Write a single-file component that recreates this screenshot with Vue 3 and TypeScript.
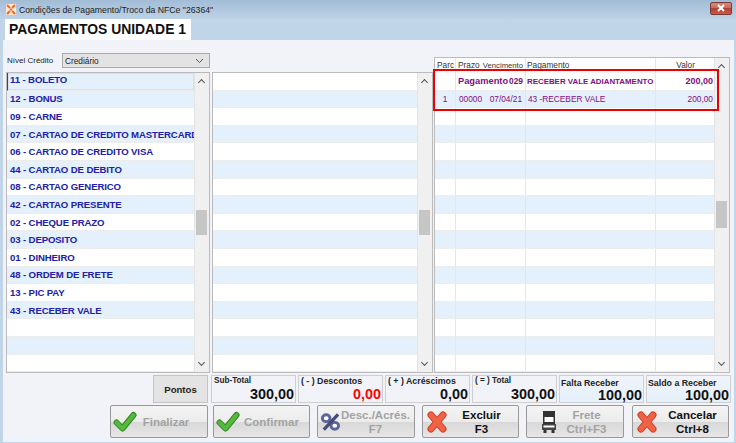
<script setup lang="ts">
const items = ['11 - BOLETO','12 - BONUS','09 - CARNE','07 - CARTAO DE CREDITO MASTERCARD','06 - CARTAO DE CREDITO VISA','44 - CARTAO DE DEBITO','08 - CARTAO GENERICO','42 - CARTAO PRESENTE','02 - CHEQUE PRAZO','03 - DEPOSITO','01 - DINHEIRO','48 - ORDEM DE FRETE','13 - PIC PAY','43 - RECEBER VALE','','','']
const midRows = Array.from({ length: 17 })
const rightRows = Array.from({ length: 15 })
const totals = [
  { label: 'Sub-Total', value: '300,00', cls: 'sm' },
  { label: '( - ) Descontos', value: '0,00', cls: 'red' },
  { label: '( + ) Acréscimos', value: '0,00', cls: '' },
  { label: '( = ) Total', value: '300,00', cls: 'sm' },
  { label: 'Falta Receber', value: '100,00', cls: 'blue' },
  { label: 'Saldo a Receber', value: '100,00', cls: 'blue' },
]
</script>

<template>
  <div class="win">
    <div class="title">
      <svg class="appicon" width="10" height="11" viewBox="0 0 10 11"><rect width="10" height="11" fill="#fbe6d2"/><path d="M1 1l3 3M9 1L6 4M1 10l3-3M9 10L6 7" stroke="#ef6a2a" stroke-width="2"/><rect x="4" y="4.5" width="2" height="2" fill="#ef6a2a"/></svg>
      <span class="title-text">Condições de Pagamento/Troco da NFCe "26364"</span>
      <div class="close"><svg width="10" height="8" viewBox="0 0 10 8"><path d="M2 1l6 6M8 1L2 7" stroke="#fff" stroke-width="2"/></svg></div>
    </div>
    <div class="tabbar"><div class="tab">PAGAMENTOS UNIDADE 1</div></div>
    <div class="content">
      <div class="filter">
        <span class="flabel">Nível Crédito</span>
        <div class="select"><span>Crediário</span><svg width="9" height="6" viewBox="0 0 9 6"><path d="M1 1l3.5 3.5L8 1" fill="none" stroke="#555" stroke-width="1"/></svg></div>
      </div>
      <div class="panels">
        <div class="panel p-left">
          <div class="rows">
            <div v-for="(it, i) in items" :key="i" class="row" :class="{ alt: i % 2 === 1 || i === 0, sel: i === 0 }"><span class="item">{{ it }}</span></div>
          </div>
          <div class="sb"><span class="up"></span><div class="thumb t1"></div><span class="down"></span></div>
        </div>
        <div class="panel p-mid">
          <div class="rows">
            <div v-for="(_, i) in midRows" :key="i" class="row" :class="{ alt: i % 2 === 1 }"></div>
          </div>
          <div class="sb"><span class="up"></span><div class="thumb t2"></div><span class="down"></span></div>
        </div>
        <div class="panel p-right">
          <div class="rows">
            <div class="hrow"><span class="c1">Parc</span><span class="c2 sp hd2"><span>Prazo</span><span class="venc">Vencimento</span></span><span class="c3">Pagamento</span><span class="c4">Valor</span></div>
            <div class="trow head"><span class="c1"></span><span class="c2 sp"><span>Pagamento</span><span class="num">029</span></span><span class="c3 caps">RECEBER VALE ADIANTAMENTO</span><span class="c4">200,00</span></div>
            <div class="trow alt det"><span class="c1 ctr">1</span><span class="c2 sp det2"><span>00000</span><span>07/04/21</span></span><span class="c3 ind">43 -RECEBER VALE</span><span class="c4">200,00</span></div>
            <div v-for="(_, i) in rightRows" :key="i" class="trow" :class="{ alt: i % 2 === 1 }"><span class="c1"></span><span class="c2"></span><span class="c3"></span><span class="c4"></span></div>
          </div>
          <div class="sb"><span class="up"></span><div class="thumb t3"></div><span class="down"></span></div>
          <div class="redbox"></div>
        </div>
      </div>
      <div class="totals">
        <div class="pontos">Pontos</div>
        <div v-for="t in totals" :key="t.label" class="tot" :class="t.cls">
          <div class="tl">{{ t.label }}</div>
          <div class="tv">{{ t.value }}</div>
        </div>
      </div>
      <div class="actions">
        <div class="btn dis w98">
          <svg width="24" height="22" viewBox="0 0 24 22"><path d="M3.500 11.500l6 6L20.500 4" fill="none" stroke="#2f8a26" stroke-width="6" stroke-linecap="round" stroke-linejoin="round"/><path d="M3.500 11.500l6 6L20.500 4" fill="none" stroke="#56b83c" stroke-width="4" stroke-linecap="round" stroke-linejoin="round"/></svg>
          <span class="bt m12">Finalizar</span>
        </div>
        <div class="btn dis w97 g">
          <svg width="24" height="22" viewBox="0 0 24 22"><path d="M3.500 11.500l6 6L20.500 4" fill="none" stroke="#2f8a26" stroke-width="6" stroke-linecap="round" stroke-linejoin="round"/><path d="M3.500 11.500l6 6L20.500 4" fill="none" stroke="#56b83c" stroke-width="4" stroke-linecap="round" stroke-linejoin="round"/></svg>
          <span class="bt m6">Confirmar</span>
        </div>
        <div class="btn dis w98 g2">
          <svg width="22" height="20" viewBox="0 0 22 20"><ellipse cx="6.500" cy="6" rx="4" ry="3.600" fill="#fff" stroke="#5b6598" stroke-width="3"/><ellipse cx="15.500" cy="14" rx="4" ry="3.600" fill="#fff" stroke="#5b6598" stroke-width="3"/><path d="M19 2L4 18" stroke="#444c7c" stroke-width="3.400"/></svg>
          <span class="bt m4">Desc./Acrés.<br>F7</span>
        </div>
        <div class="btn w97 g2">
          <svg width="24" height="24" viewBox="0 0 24 24"><path d="M6 5l12 14M18 5L6 19" fill="none" stroke="#cf4027" stroke-width="7" stroke-linecap="round"/><path d="M6 5l12 14M18 5L6 19" fill="none" stroke="#ee6246" stroke-width="5" stroke-linecap="round"/></svg>
          <span class="bt m4">Excluir<br>F3</span>
        </div>
        <div class="btn dis w98 g2 truck">
          <svg width="14" height="22" viewBox="0 0 14 22"><path d="M1 0h12v15H1z" fill="#333"/><path d="M2.500 6h9v5h-9z" fill="#fff"/><path d="M0 13h14v6H0z" fill="#444"/><path d="M1.500 14.500h11v2h-11z" fill="#fff"/><path d="M1.500 19h3v3h-3zM9.500 19h3v3h-3z" fill="#333"/></svg>
          <span class="bt m6">Frete<br>Ctrl+F3</span>
        </div>
        <div class="btn w97 g3">
          <svg width="24" height="24" viewBox="0 0 24 24"><path d="M6 5l12 14M18 5L6 19" fill="none" stroke="#cf4027" stroke-width="7" stroke-linecap="round"/><path d="M6 5l12 14M18 5L6 19" fill="none" stroke="#ee6246" stroke-width="5" stroke-linecap="round"/></svg>
          <span class="bt m2">Cancelar<br>Ctrl+8</span>
        </div>
      </div>
    </div>
  </div>
</template>

<style>
html, body { margin: 0; padding: 0; background: #f1f3f9; }
</style>

<style scoped>
.win { width: 736px; height: 443px; overflow: hidden; font-family: "Liberation Sans", Arial, sans-serif; background: #c0d5e7; display: flex; flex-direction: column; box-sizing: border-box; position: relative; }
.title { height: 19px; display: flex; align-items: center; background: linear-gradient(#a3bcd6, #bcd2e6); padding-left: 6px; flex: none; }
.appicon { margin-right: 3px; }
.title-text { font-size: 8.7px; color: #222; }
.close { margin-left: auto; margin-right: 4px; margin-top: -3px; width: 22px; height: 13px; background: linear-gradient(#d88a80 0, #c86a5e 45%, #b0402f 50%, #c85b4c 100%); border: 1px solid #7a3a34; border-radius: 2px; box-sizing: border-box; display: flex; align-items: center; justify-content: center; }
.tabbar { height: 21px; padding-left: 5px; flex: none; background: #c0d5e7; }
.tab { width: 186px; height: 21px; background: #fff; font-weight: bold; font-size: 13.9px; line-height: 20px; padding-left: 4px; box-sizing: border-box; color: #111; white-space: nowrap; }
.content { flex: 1; margin: 0 2px 1px 3px; background: #f1f3f9; padding: 0 3px 0 3px; display: flex; flex-direction: column; min-height: 0; }
.filter { height: 32px; display: flex; align-items: center; flex: none; box-sizing: border-box; padding-top: 9px; }
.flabel { font-size: 8px; width: 56px; color: #222; padding-left: 1px; box-sizing: border-box; }
.select { width: 148px; height: 15px; box-sizing: border-box; background: #e3e3e3; border: 1px solid #aaa; font-size: 8.3px; display: flex; align-items: center; justify-content: space-between; padding: 0 5px 0 2px; color: #222; }
.panels { position: relative; height: 301px; flex: none; }
.panel { position: absolute; box-sizing: border-box; background: #fff; border: 1px solid #bbb; display: flex; overflow: visible; }
.p-left { left: 0; top: 0; width: 204px; height: 301px; }
.p-mid { left: 206px; top: 0; width: 221px; height: 301px; }
.p-right { left: 428px; top: -15px; width: 296px; height: 316px; }
.rows { flex: 1; min-width: 0; overflow: hidden; }
.row { height: 17.6px; box-sizing: border-box; border-bottom: 1px solid #ececec; display: flex; align-items: center; background: #fff; padding-left: 3px; white-space: nowrap; overflow: hidden; }
.row.alt { background: #e4f0fc; }
.row.sel { box-shadow: inset 0 0 0 1px #cfe0f0; padding-bottom: 3px; border-left: 1px solid #445; padding-left: 2px; }
.item { font-size: 9.6px; font-weight: bold; color: #2020a8; letter-spacing: -.12px; }
.sb { width: 14px; background: #f0f0f0; border-left: 1px solid #e4e4e4; position: relative; flex: none; }
.up, .down { position: absolute; left: 4px; width: 4px; height: 4px; border-left: 1px solid #555; border-top: 1px solid #555; }
.up { top: 7px; transform: rotate(45deg); }
.down { bottom: 7px; transform: rotate(225deg); }
.thumb { position: absolute; left: 1px; width: 11px; height: 25px; background: #c6c6c6; }
.t1 { top: 137px; }
.t2 { top: 137px; }
.t3 { top: 143px; height: 27px; }
.hrow { display: flex; height: 15px; font-size: 8.3px; line-height: 15px; color: #333; overflow: hidden; }
.hd2 { padding: 0 2px 0 3px; }
.venc { font-size: 7.7px; }
.trow { display: flex; height: 17.6px; box-sizing: border-box; border-bottom: 1px solid #ececec; font-size: 8.3px; line-height: 17px; color: #800e80; white-space: nowrap; }
.trow.alt { background: #e4f0fc; }
.c1 { width: 21px; flex: none; box-sizing: border-box; padding-left: 2px; border-right: 1px solid #e6e6e6; }
.c1.ctr { text-align: center; padding-left: 0; }
.c2 { width: 70px; flex: none; box-sizing: border-box; padding: 0 2px; border-right: 1px solid #e6e6e6; }
.sp { display: flex; justify-content: space-between; }
.det2 { padding: 0 3px 0 3px; }
.c3 { width: 130px; flex: none; box-sizing: border-box; padding-left: 1px; border-right: 1px solid #e6e6e6; overflow: hidden; }
.ind { padding-left: 2px; }
.c4 { flex: 1; text-align: right; padding-right: 1px; }
.hrow .c4 { padding-right: 19px; }
.trow.head { font-weight: bold; font-size: 9.3px; }
.trow.head .num { font-size: 8.4px; }
.trow.head .caps { font-size: 7.9px; }
.trow.head .c4 { font-size: 9px; }
.redbox { position: absolute; left: -2px; top: 11px; width: 286px; height: 42px; box-sizing: border-box; border: 2px solid #ee0000; }
.totals { display: flex; height: 28px; margin-top: 2px; flex: none; justify-content: flex-end; gap: 2px; }
.pontos { width: 55px; height: 28px; margin-right: 1px; background: #e3e3e3; border: 1px solid #c4c4c4; box-sizing: border-box; font-size: 9.6px; font-weight: bold; display: flex; align-items: center; justify-content: center; color: #222; }
.tot { width: 85px; height: 28px; box-sizing: border-box; border: 1px solid #cfcfcf; padding: 0 1px 0 2px; background: #f1f3f9; }
.tot.blue { background: linear-gradient(#f1f3f9, #e4f0fc); padding: 2px 1px 0 1px; }
.tl { font-size: 8.8px; font-weight: bold; line-height: 10px; color: #222; white-space: nowrap; }
.sm .tl { font-size: 8.2px; }
.tv { font-size: 14.4px; font-weight: bold; text-align: right; line-height: 16px; color: #111; }
.blue .tv { line-height: 14px; }
.red .tv { color: #f00; }
.actions { display: flex; height: 33px; margin-top: 2px; flex: none; padding-left: 104px; gap: 5px; }
.btn { height: 33px; box-sizing: border-box; background: linear-gradient(#f4f4f4 0, #ececec 50%, #d8d8d8 52%, #e6e6e6 100%); border: 1px solid #999; border-radius: 2px; display: flex; align-items: center; padding-left: 2px; font-weight: bold; color: #111; flex: none; }
.w98 { width: 98px; }
.w97 { width: 97px; }
.g2 { margin-left: 2px; }
.g3 { margin-left: 3px; }
.truck { padding-left: 15px; }
.bt { font-size: 11.5px; flex: 1; text-align: center; line-height: 14px; }
.m12 { margin-right: 12px; }
.m6 { margin-right: 6px; }
.m4 { margin-right: 4px; }
.m2 { margin-right: 2px; }
.dis .bt { color: #a3a3a3; }
</style>
